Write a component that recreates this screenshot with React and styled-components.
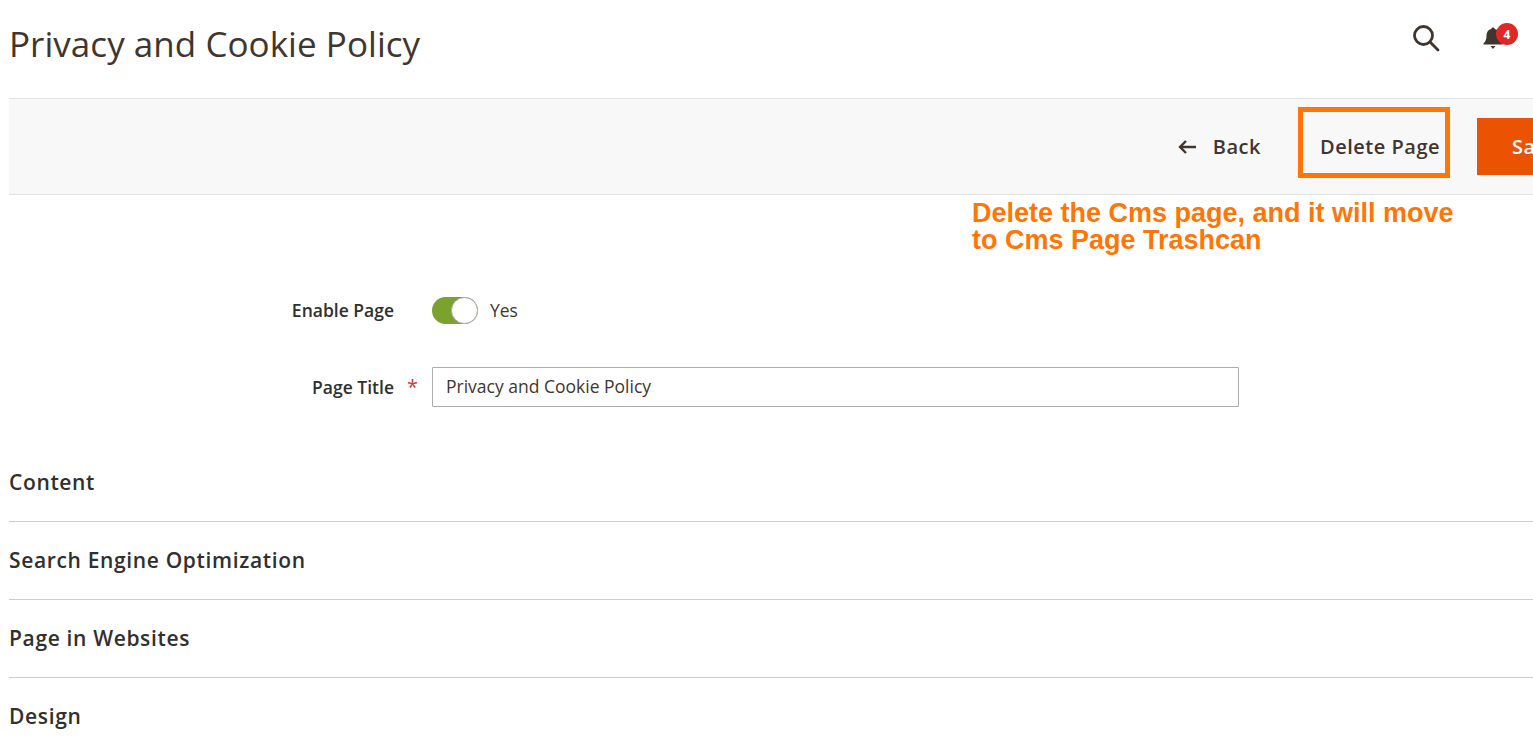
import React from 'react';
import styled, { createGlobalStyle } from 'styled-components';

const GlobalStyle = createGlobalStyle`
  html, body {
    margin: 0;
    padding: 0;
    background: #fff;
    overflow: hidden;
  }
  body {
    font-family: "Open Sans", "Noto Sans", sans-serif;
    color: #41362f;
  }
`;

const Page = styled.div`
  position: relative;
  width: 1533px;
  height: 754px;
  padding-left: 9px;
  box-sizing: border-box;
  overflow: hidden;
`;

const Header = styled.header`
  height: 98px;
  display: flex;
  align-items: center;
  justify-content: space-between;
  padding-bottom: 12px;
  box-sizing: border-box;
`;

const Title = styled.h1`
  margin: 0;
  font-size: 35px;
  letter-spacing: 0.04px;
  font-weight: 400;
  color: #41362f;
`;

const HeaderIcons = styled.div`
  display: flex;
  align-items: center;
  gap: 42px;
  padding-right: 29px;
  margin-bottom: 10px;
`;

const IconButton = styled.div`
  position: relative;
  display: flex;
  color: #41362f;
`;

const Badge = styled.span`
  position: absolute;
  top: -3px;
  left: 14px;
  width: 22px;
  height: 22px;
  border-radius: 50%;
  background: #e22626;
  color: #fff;
  font-size: 12px;
  font-weight: 700;
  display: flex;
  align-items: center;
  justify-content: center;
`;

const ActionBar = styled.div`
  height: 97px;
  box-sizing: border-box;
  background: #f8f8f8;
  border-top: 1px solid #e3e3e3;
  border-bottom: 1px solid #e3e3e3;
  display: flex;
  align-items: center;
  justify-content: flex-end;
  margin-right: -160px;
`;

const BackButton = styled.div`
  display: flex;
  align-items: center;
  gap: 16px;
  font-size: 20px;
  font-weight: 600;
  letter-spacing: 0.5px;
  color: #41362f;
  margin-right: 37px;
`;

const DeleteButton = styled.div`
  width: 152px;
  height: 71px;
  box-sizing: border-box;
  border: 5px solid #ff7506;
  display: flex;
  align-items: center;
  justify-content: flex-end;
  padding: 8px 5px 0 0;
  margin-bottom: 8px;
  font-size: 20px;
  font-weight: 600;
  letter-spacing: 0.5px;
  color: #41362f;
  white-space: nowrap;
  margin-right: 27px;
`;

const SaveButton = styled.div`
  width: 216px;
  height: 57px;
  box-sizing: border-box;
  background: #eb5202;
  color: #fff;
  font-size: 20px;
  font-weight: 600;
  letter-spacing: 0.5px;
  display: flex;
  align-items: center;
  padding-left: 35px;
`;

const Annotation = styled.div`
  position: absolute;
  left: 972px;
  top: 200px;
  font-family: "Liberation Sans", Arial, sans-serif;
  font-size: 27px;
  font-weight: 700;
  line-height: 27px;
  color: #ff7506;
  white-space: nowrap;
`;

const Form = styled.div`
  padding-top: 95px;
  display: flex;
  flex-direction: column;
  gap: 37px;
`;

const FieldRow = styled.div`
  display: grid;
  grid-template-columns: 385px 38px 807px;
  align-items: center;
  min-height: 40px;
`;

const Label = styled.label`
  text-align: right;
  font-size: 17.5px;
  font-weight: 600;
  color: #303030;
`;

const Required = styled.span`
  color: #d8383a;
  font-size: 20px;
  font-weight: 400;
  padding-left: 13px;
  line-height: 1;
`;

const ToggleWrap = styled.div`
  display: flex;
  align-items: center;
  gap: 12px;
  font-size: 17.5px;
  color: #41362f;
`;

const Toggle = styled.span`
  position: relative;
  display: block;
  width: 46px;
  height: 27px;
  border-radius: 14px;
  background: #79a22e;
`;

const Knob = styled.span`
  position: absolute;
  right: 0;
  top: 0;
  width: 27px;
  height: 27px;
  box-sizing: border-box;
  border-radius: 50%;
  background: #fff;
  border: 1px solid #adadad;
`;

const TextInput = styled.div`
  height: 40px;
  box-sizing: border-box;
  border: 1px solid #adadad;
  border-radius: 1px;
  background: #fff;
  padding-left: 13px;
  font-size: 17.5px;
  line-height: 37px;
  color: #41362f;
`;

const Sections = styled.div`
  margin-top: 37px;
`;

const Section = styled.div`
  height: 78px;
  box-sizing: border-box;
  border-bottom: ${(p) => (p.$last ? 'none' : '1px solid #cccccc')};
  padding-bottom: 2px;
  display: flex;
  align-items: center;
  font-size: 21px;
  font-weight: 600;
  letter-spacing: 0.65px;
  color: #303030;
  margin-right: -9px;
`;

const sectionNames = ['Content', 'Search Engine Optimization', 'Page in Websites', 'Design'];

export default function App() {
  return (
    <>
      <GlobalStyle />
      <Page>
        <Header>
          <Title>Privacy and Cookie Policy</Title>
          <HeaderIcons>
            <IconButton>
              <svg width="28" height="28" viewBox="0 0 28 28" fill="none" stroke="currentColor" strokeWidth="2.8">
                <circle cx="11.5" cy="11.5" r="9" />
                <path d="M18 18l8 8" strokeLinecap="round" />
              </svg>
            </IconButton>
            <IconButton>
              <svg width="22" height="24" viewBox="0 0 22 24" fill="currentColor">
                <path d="M11 1.5c1 0 1.7.7 1.7 1.6 3.2.7 4.8 3.3 4.8 6.4 0 4 1 6 3 7.8v1.2H1.5v-1.2c2-1.800 3-3.800 3-7.800 0-3.100 1.600-5.700 4.800-6.400C9.300 2.200 10 1.500 11 1.500z" />
                <path d="M8.500 20h5L11 23z" />
              </svg>
              <Badge>4</Badge>
            </IconButton>
          </HeaderIcons>
        </Header>

        <ActionBar>
          <BackButton>
            <svg width="20" height="16" viewBox="0 0 20 16" fill="none" stroke="currentColor" strokeWidth="2.4">
              <path d="M19 8H3M9 2L3 8l6 6" />
            </svg>
            Back
          </BackButton>
          <DeleteButton>Delete Page</DeleteButton>
          <SaveButton>Save Page</SaveButton>
        </ActionBar>

        <Annotation>
          Delete the Cms page, and it will move
          <br />
          to Cms Page Trashcan
        </Annotation>

        <Form>
          <FieldRow>
            <Label>Enable Page</Label>
            <span />
            <ToggleWrap>
              <Toggle>
                <Knob />
              </Toggle>
              Yes
            </ToggleWrap>
          </FieldRow>
          <FieldRow>
            <Label>Page Title</Label>
            <Required>*</Required>
            <TextInput>Privacy and Cookie Policy</TextInput>
          </FieldRow>
        </Form>

        <Sections>
          {sectionNames.map((name, i) => (
            <Section key={name} $last={i === sectionNames.length - 1}>
              {name}
            </Section>
          ))}
        </Sections>
      </Page>
    </>
  );
}
